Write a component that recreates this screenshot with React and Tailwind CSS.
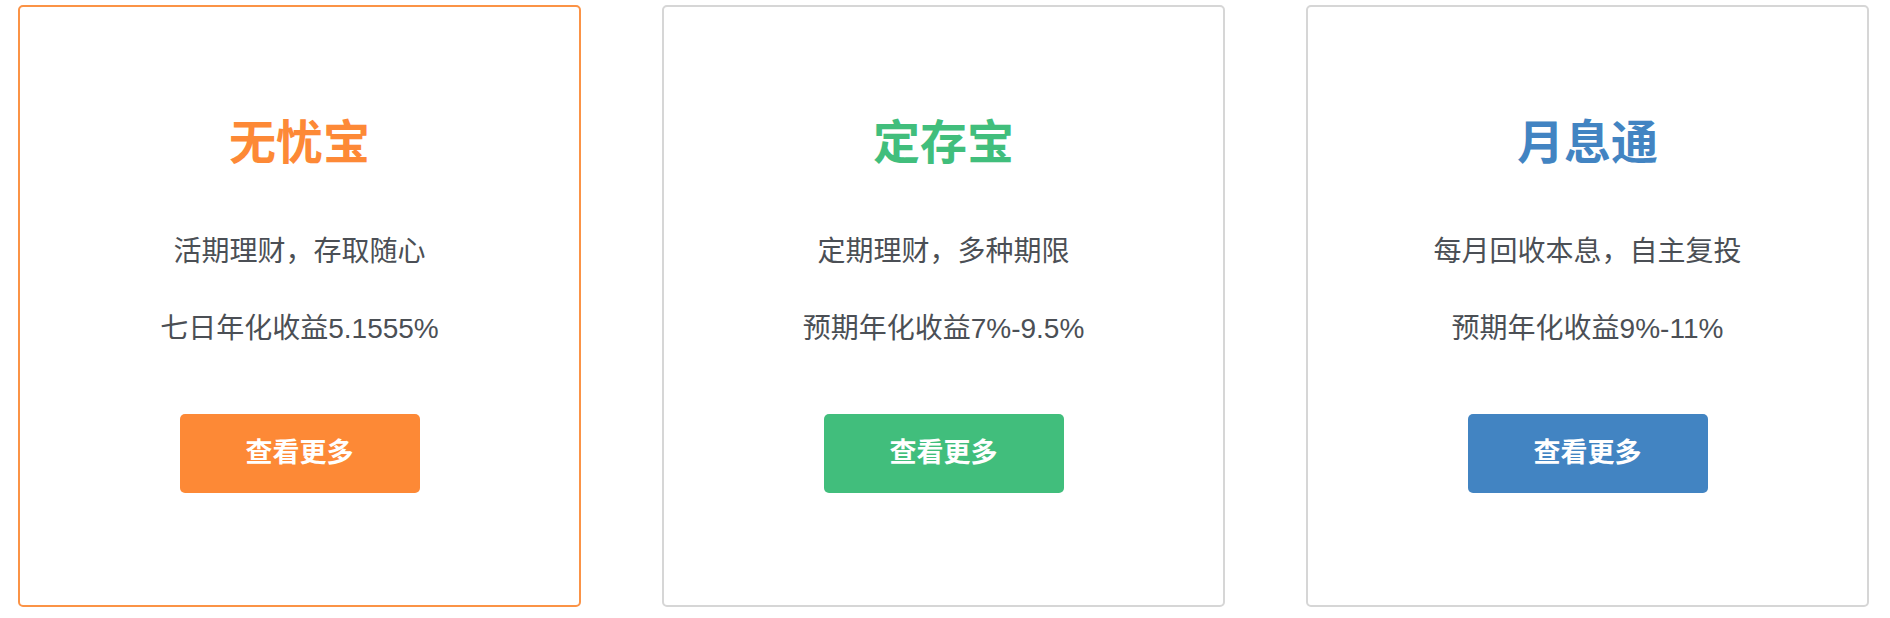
const products = [
  {
    name: "无忧宝",
    desc: "活期理财，存取随心",
    rate: "七日年化收益5.1555%",
    title: "text-[#fd8936]",
    button: "bg-[#fd8936]",
    border: "border-[#fb9346]",
  },
  {
    name: "定存宝",
    desc: "定期理财，多种期限",
    rate: "预期年化收益7%-9.5%",
    title: "text-[#41be7c]",
    button: "bg-[#41be7c]",
    border: "border-[#d6d6d6]",
  },
  {
    name: "月息通",
    desc: "每月回收本息，自主复投",
    rate: "预期年化收益9%-11%",
    title: "text-[#4284c2]",
    button: "bg-[#4284c2]",
    border: "border-[#d6d6d6]",
  },
];

function ProductCard({ p }) {
  return (
    <div
      className={`flex h-[602px] flex-col items-center rounded-[5px] border-2 bg-white ${p.border}`}
    >
      <h2 className={`mt-[112px] text-[47px] font-bold leading-[47px] ${p.title}`}>{p.name}</h2>
      <p className="mt-[72px] text-[28px] leading-[28px] text-[#4b4f55]">{p.desc}</p>
      <p className="mt-[49px] text-[28px] leading-[28px] text-[#4b4f55]">{p.rate}</p>
      <button
        className={`mt-[71px] flex h-[79px] w-[240px] items-center justify-center rounded-[5px] text-[27px] font-bold text-white ${p.button}`}
      >
        查看更多
      </button>
    </div>
  );
}

export default function App() {
  return (
    <div
      className="min-h-[618px] w-full bg-white pl-[18px] pr-[21px] pt-[5px]"
      style={{ fontFamily: '"Liberation Sans", "Noto Sans CJK SC", sans-serif' }}
    >
      <div className="grid grid-cols-3 gap-[81px]">
        {products.map((p) => (
          <ProductCard key={p.name} p={p} />
        ))}
      </div>
    </div>
  );
}
